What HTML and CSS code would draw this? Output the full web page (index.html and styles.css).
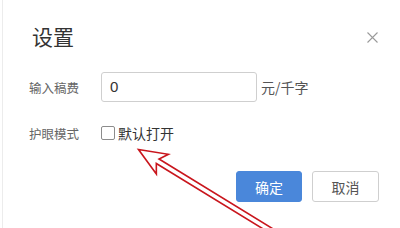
FILE: index.html
```html
<!DOCTYPE html>
<html lang="zh">
<head>
<meta charset="utf-8">
<link rel="stylesheet" href="styles.css">
</head>
<body>
<div class="dialog">
  <div class="header">
    <h1 class="title">设置</h1>
    <button class="close" aria-label="关闭">
      <svg width="11" height="11" viewBox="0 0 11 11"><path d="M0.5 0.5L10.5 10.5M10.5 0.5L0.5 10.5" stroke="#9a9a9a" stroke-width="1.1" fill="none"/></svg>
    </button>
  </div>
  <div class="row row-fee">
    <span class="label">输入稿费</span>
    <div class="input">0</div>
    <span class="unit">元/千字</span>
  </div>
  <div class="row row-eye">
    <span class="label">护眼模式</span>
    <span class="checkbox"></span>
    <span class="check-text">默认打开</span>
  </div>
  <div class="actions">
    <button class="btn btn-primary">确定</button>
    <button class="btn btn-default">取消</button>
  </div>
</div>
<svg class="arrow" width="400" height="228" viewBox="0 0 400 228">
  <g transform="translate(138.5 149.5) rotate(31.5)">
    <polygon points="0,0 28,-11.5 22.5,-2.6 175,-2.6 175,2.6 22.5,2.6 28,11.5" fill="#fff" stroke="#c9161d" stroke-width="1.6" stroke-linejoin="miter"/>
  </g>
</svg>
</body>
</html>
```
FILE: styles.css
```css
html, body {
  margin: 0;
  padding: 0;
  background: #fff;
}
body {
  width: 400px;
  height: 228px;
  overflow: hidden;
  position: relative;
  font-family: "Noto Sans CJK SC", "Noto Sans", sans-serif;
}
.dialog {
  margin-left: 2px;
  height: 228px;
  border-left: 1px solid #ececec;
  box-sizing: border-box;
  padding: 22px 0 0 26px;
}
.header {
  display: flex;
  align-items: center;
  justify-content: space-between;
  padding-right: 22px;
  height: 28px;
}
.title {
  margin: 0 0 0 3px;
  font-size: 21px;
  line-height: 28px;
  font-weight: 400;
  color: #333;
}
.close {
  border: 0;
  background: none;
  padding: 0;
  width: 11px;
  height: 11px;
  display: flex;
  margin-top: 2px;
}
.row {
  display: flex;
  align-items: center;
}
.row-fee {
  margin-top: 22px;
  height: 30px;
}
.row-eye {
  margin-top: 21px;
  height: 20px;
}
.label {
  width: 72px;
  font-size: 12.5px;
  color: #666;
}
.input {
  width: 146px;
  height: 28px;
  border: 1px solid #cfcfcf;
  border-radius: 3px;
  box-sizing: content-box;
  padding-left: 8px;
  font-family: "Liberation Sans", Arial, sans-serif;
  font-size: 15px;
  line-height: 28px;
  color: #333;
}
.unit {
  margin-left: 4px;
  font-size: 14px;
  color: #555;
}
.checkbox {
  width: 12px;
  height: 12px;
  border: 1px solid #8c8c8c;
  border-radius: 2px;
  box-sizing: content-box;
}
.check-text {
  margin-left: 3px;
  font-size: 14px;
  color: #333;
}
.actions {
  margin-top: 28px;
  display: flex;
  justify-content: flex-end;
  gap: 10px;
  padding-right: 21px;
}
.btn {
  height: 31px;
  width: 66px;
  border-radius: 3px;
  font-family: "Noto Sans CJK SC", sans-serif;
  font-size: 14px;
  padding: 0;
}
.btn-primary {
  background: #4a87da;
  border: 1px solid #4a87da;
  color: #fff;
}
.btn-default {
  width: 67px;
  background: #fff;
  border: 1px solid #cfcfcf;
  color: #555;
}
.arrow {
  position: absolute;
  left: 0;
  top: 0;
  pointer-events: none;
}
```
